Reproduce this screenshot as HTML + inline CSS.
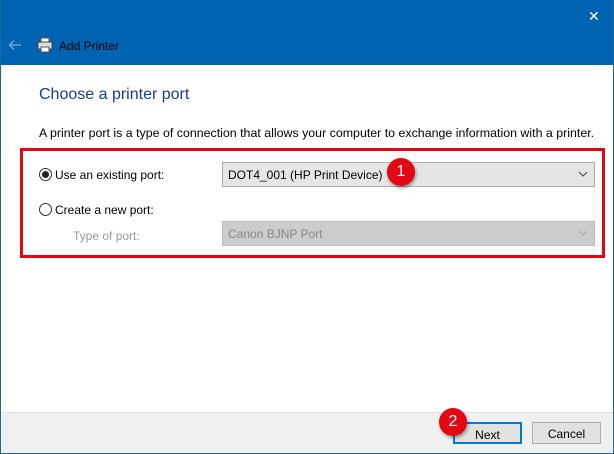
<!DOCTYPE html>
<html><head><style>
*{margin:0;padding:0;box-sizing:border-box}
body{width:614px;height:454px;overflow:hidden;font-family:"Liberation Sans",sans-serif;font-size:12px;color:#000;position:relative;background:#fff}
.a{position:absolute}
.top{left:0;top:0;width:614px;height:65px;background:#0063b1}
.frame{left:0;top:0;width:614px;height:454px;border:1px solid #1a6b8c;border-top:none}
.combo{border:1px solid #adadad;background:#e5e5e5;height:25px;padding:5px 0 0 5px;font-size:12px}
.radio{width:13px;height:13px;border:1px solid #333;border-radius:50%;background:#fff}
.btn{border:1px solid #adadad;background:#e1e1e1;height:22px;width:69px;text-align:center;padding-top:4px}
.badge{width:28px;height:28px;border-radius:50%;background:#e30613;color:#fff;text-align:center;font-size:16px;line-height:28px;box-shadow:1px 2px 3px rgba(0,0,0,.4)}
</style></head><body>
<div class="a top"></div>
<div class="a" style="left:588px;top:8px;color:#fff;font-size:14px">✕</div>
<svg class="a" style="left:8px;top:39px" width="14" height="12"><path d="M13 6H2M6 1.5L1.5 6 6 10.5" stroke="#7fa9d6" stroke-width="1.3" fill="none"/></svg>
<svg class="a" style="left:37px;top:37px" width="16" height="16"><rect x="4" y="1" width="8" height="5" fill="#fff" stroke="#555"/><rect x="1" y="5" width="14" height="7" fill="#ddd" stroke="#444"/><rect x="4" y="10" width="8" height="5" fill="#fff" stroke="#555"/></svg>
<div class="a" style="left:59px;top:39px;color:#000;font-size:12px">Add Printer</div>
<div class="a" style="left:39px;top:86px;color:#1e3a8a;font-size:16px">Choose a printer port</div>
<div class="a" style="left:39px;top:126px;font-size:12.4px">A printer port is a type of connection that allows your computer to exchange information with a printer.</div>
<div class="a" style="left:20px;top:148px;width:585px;height:110px;border:3px solid #e30613"></div>
<div class="a radio" style="left:39px;top:168px"><div style="width:7px;height:7px;border-radius:50%;background:#222;margin:2px"></div></div>
<div class="a" style="left:55px;top:168px">Use an existing port:</div>
<div class="a combo" style="left:222px;top:162px;width:373px">DOT4_001 (HP Print Device)</div>
<svg class="a" style="left:578px;top:171px" width="10" height="6"><path d="M1 1l4 4 4-4" stroke="#444" fill="none"/></svg>
<div class="a radio" style="left:39px;top:203px"></div>
<div class="a" style="left:55px;top:203px">Create a new port:</div>
<div class="a" style="left:73px;top:229px;color:#999">Type of port:</div>
<div class="a combo" style="left:222px;top:221px;width:373px;color:#888;background:#ccc;border-color:#bbb">Canon BJNP Port</div>
<svg class="a" style="left:578px;top:230px" width="10" height="6"><path d="M1 1l4 4 4-4" stroke="#aaa" fill="none"/></svg>
<div class="a badge" style="left:387px;top:158px">1</div>
<div class="a" style="left:1px;top:412px;width:612px;height:41px;background:#f0f0f0;border-top:1px solid #dfdfdf"></div>
<div class="a btn" style="left:453px;top:422px;border:2px solid #0078d7">Next</div>
<div class="a btn" style="left:532px;top:422px">Cancel</div>
<div class="a badge" style="left:439px;top:408px">2</div>
<div class="a frame"></div>
</body></html>
